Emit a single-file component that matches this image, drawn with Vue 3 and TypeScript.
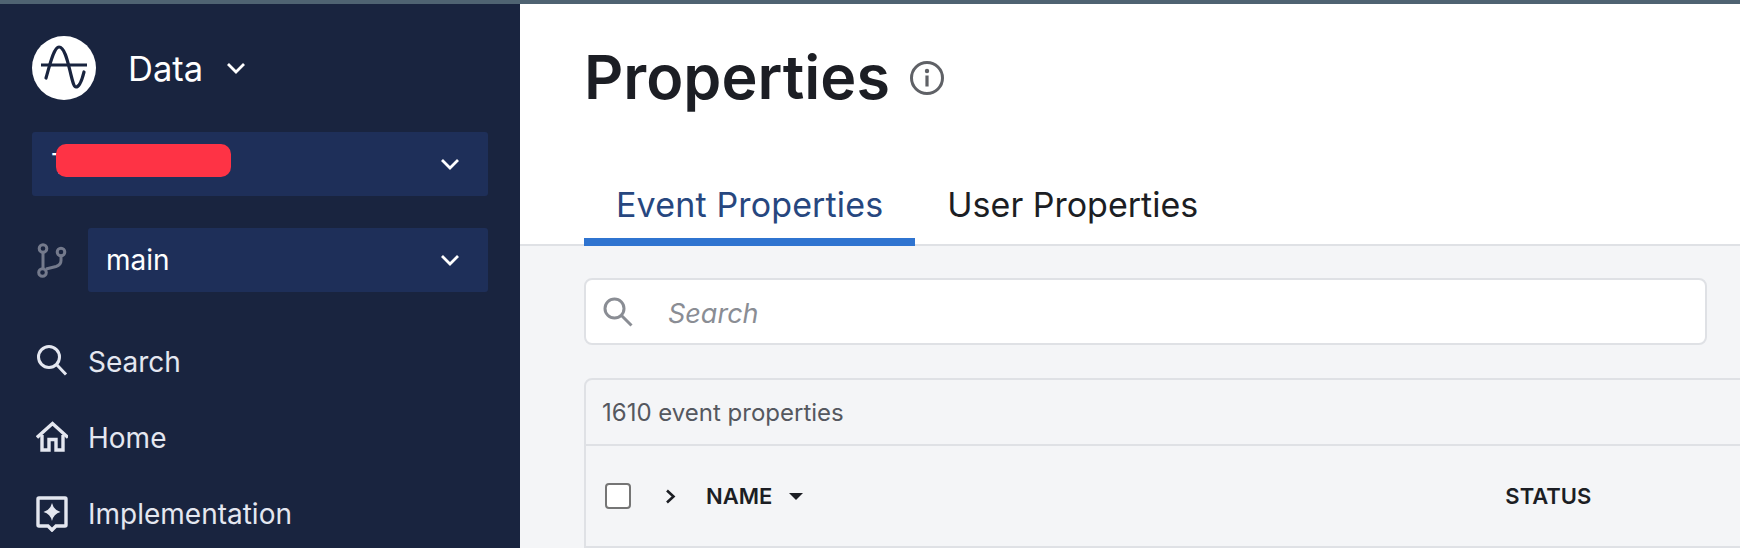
<template>
  <div class="page">
    <div class="topbar" />
    <div class="shell">
      <aside class="sidebar">
        <div class="brand">
          <svg class="logo" viewBox="0 0 64 64">
            <circle cx="32" cy="32" r="32" fill="#fff" />
            <path d="M9 29h46" stroke="#19243f" stroke-width="3.200" fill="none" />
            <path
              d="M14 42 C18 28 22 11 27 11 C33 11 36 27 39 39 C41 47 42 51 44 51 C47 51 50 44 52 36"
              stroke="#19243f"
              stroke-width="3.200"
              fill="none"
              stroke-linecap="round"
            />
          </svg>
          <span class="brand__name">Data</span>
          <svg class="chevron brand__chevron" viewBox="0 0 20 12"><path d="M2 2l8 8 8-8" /></svg>
        </div>

        <div class="select select--org">
          <span class="select__label">T</span>
          <span class="redact" />
          <svg class="chevron" viewBox="0 0 20 12"><path d="M2 2l8 8 8-8" /></svg>
        </div>

        <div class="branch">
          <svg class="branch__icon" viewBox="0 0 30 35">
            <circle cx="6" cy="5.500" r="3.800" />
            <circle cx="5.500" cy="29.500" r="3.800" />
            <circle cx="24" cy="9" r="3.800" />
            <path d="M6 9.500v16M9 26l10-2.500q5-1.500 5-6v-4.500" />
          </svg>
          <div class="select select--branch">
            <span class="select__label">main</span>
            <svg class="chevron" viewBox="0 0 20 12"><path d="M2 2l8 8 8-8" /></svg>
          </div>
        </div>

        <nav class="nav">
          <a v-for="item in navItems" :key="item.label" class="nav__item">
            <svg class="nav__icon" viewBox="0 0 32 36" v-html="item.icon" />
            <span>{{ item.label }}</span>
          </a>
        </nav>
      </aside>

      <main class="content">
        <header class="header">
          <div class="title">
            <h1>Properties</h1>
            <svg class="title__info" viewBox="0 0 34 34">
              <circle cx="17" cy="17" r="15.500" fill="none" stroke="#5f6166" stroke-width="3" />
              <circle cx="17" cy="10" r="2.200" fill="#5f6166" />
              <rect x="15.400" y="14.500" width="3.200" height="11" fill="#5f6166" />
            </svg>
          </div>
          <div class="tabs">
            <button class="tab tab--active">Event Properties</button>
            <button class="tab">User Properties</button>
          </div>
        </header>

        <section class="body">
          <div class="search">
            <svg class="search__icon" viewBox="0 0 30 30">
              <circle cx="11.500" cy="11.500" r="9.500" />
              <path d="M18.500 18.500L28.500 28.500" />
            </svg>
            <span class="search__text">Search</span>
          </div>

          <div class="table">
            <div class="table__count">1610 event properties</div>
            <div class="table__head">
              <span class="checkbox" />
              <svg class="expand" viewBox="0 0 11 15"><path d="M2 1.500l6.500 6-6.500 6" /></svg>
              <span class="col col--name">NAME</span>
              <span class="caret" />
              <span class="col col--status">STATUS</span>
            </div>
          </div>
        </section>
      </main>
    </div>
  </div>
</template>

<script setup lang="ts">
interface NavItem {
  label: string;
  icon: string;
}

const stroke = 'fill="none" stroke="#e4e7f0" stroke-width="3"';
const thick = 'fill="none" stroke="#e4e7f0" stroke-width="3.400"';

const navItems: NavItem[] = [
  {
    label: 'Search',
    icon: `<circle cx="13" cy="13" r="10.500" ${stroke}/><path d="M20.500 20.500L30 30.500" ${stroke}/>`,
  },
  {
    label: 'Home',
    icon: `<path d="M1 17.500L16.500 3.500L32 17.500" ${thick}/><path d="M6 15V30H13V19.500H20V30H27V15" ${thick}/>`,
  },
  {
    label: 'Implementation',
    icon: `<path d="M3 2h26a1 1 0 0 1 1 1v26a1 1 0 0 1-1 1h-9l-4 4-4-4H3a1 1 0 0 1-1-1V3a1 1 0 0 1 1-1z" ${thick}/><path d="M16 7q1.500 7 8.500 9q-7 2-8.500 9q-1.500-7-8.500-9q7-2 8.500-9z" fill="#e4e7f0"/>`,
  },
];
</script>

<style>
html,
body {
  margin: 0;
  background: #fff;
}
</style>

<style scoped>
.page {
  width: 1740px;
  height: 548px;
  overflow: hidden;
  font-family: Inter, "Noto Sans", sans-serif;
}

.topbar {
  height: 4px;
  background: #4f6372;
}

.shell {
  display: flex;
  height: 544px;
}

.sidebar {
  flex: none;
  box-sizing: border-box;
  width: 520px;
  padding: 32px 32px 0;
  background: #19243f;
  color: #fff;
}

.brand {
  display: flex;
  align-items: center;
  height: 64px;
}

.logo {
  width: 64px;
  height: 64px;
}

.brand__name {
  margin-left: 32px;
  font-size: 34.500px;
}

.brand__chevron {
  margin-left: 23px;
}

.chevron {
  flex: none;
  width: 20px;
  height: 12px;
  fill: none;
  stroke: #fff;
  stroke-width: 2.800;
}

.select {
  display: flex;
  align-items: center;
  justify-content: space-between;
  box-sizing: border-box;
  height: 64px;
  padding-right: 28px;
  border-radius: 3px;
  background: #1e2f59;
}

.select--org {
  position: relative;
  margin-top: 32px;
  padding-left: 19px;
}

.select--branch {
  flex: 1;
  padding-left: 18px;
}

.select__label {
  font-size: 28px;
}

/* covers the workspace name, like in the original capture */
.redact {
  position: absolute;
  top: 12px;
  left: 24px;
  width: 175px;
  height: 33px;
  border-radius: 10px;
  background: #fe3345;
}

.branch {
  display: flex;
  align-items: center;
  margin-top: 32px;
}

.branch__icon {
  flex: none;
  width: 30px;
  height: 35px;
  margin: 0 21px 0 5px;
  fill: none;
  stroke: #747a8c;
  stroke-width: 3;
}

.nav {
  margin-top: 32px;
}

.nav__item {
  display: flex;
  align-items: center;
  height: 76px;
  padding-left: 4px;
  color: #e4e7f0;
  font-size: 28px;
}

.nav__icon {
  flex: none;
  width: 32px;
  height: 36px;
  margin-right: 20px;
}

.content {
  flex: 1;
  min-width: 0;
  background: #f4f5f7;
}

.header {
  box-sizing: border-box;
  height: 242px;
  padding: 0 64px;
  border-bottom: 2px solid #dfe1e5;
  background: #fff;
}

.title {
  display: flex;
  align-items: center;
  height: 147px;
}

.title h1 {
  margin: 0;
  color: #1c1e24;
  font-size: 61px;
  font-weight: 600;
  line-height: 1;
}

.title__info {
  flex: none;
  width: 34px;
  height: 34px;
  margin-left: 20px;
}

.tabs {
  display: flex;
  height: 93px;
  align-items: flex-end;
}

.tab {
  box-sizing: border-box;
  height: 74px;
  padding: 0 32px 2px;
  border: 0;
  border-bottom: 8px solid transparent;
  margin-bottom: -2px;
  background: none;
  color: #1c1e24;
  font: inherit;
  font-size: 34px;
}

.tab--active {
  padding-right: 32px;
  border-bottom-color: #2f74d0;
  color: #27477f;
  letter-spacing: 0.150px;
}

.body {
  padding: 32px 0 0 64px;
}

.search {
  display: flex;
  align-items: center;
  box-sizing: border-box;
  width: 1123px;
  height: 67px;
  padding-left: 17px;
  border: 2px solid #dfe1e5;
  border-radius: 8px;
  background: #fff;
}

.search__icon {
  flex: none;
  width: 30px;
  height: 30px;
  fill: none;
  stroke: #8a8d94;
  stroke-width: 3;
}

.search__text {
  margin-left: 35px;
  padding-top: 4px;
  color: #8a8d94;
  font-size: 27px;
  font-style: italic;
}

.table {
  box-sizing: border-box;
  width: 1300px;
  margin-top: 33px;
  border: 2px solid #dfe1e5;
  border-radius: 8px 0 0 0;
}

.table__count {
  display: flex;
  align-items: center;
  box-sizing: border-box;
  height: 66px;
  padding-left: 16px;
  border-bottom: 2px solid #dfe1e5;
  color: #55585f;
  font-size: 24px;
}

.table__head {
  display: flex;
  align-items: center;
  height: 100px;
  padding-left: 19px;
  color: #1c1e24;
  font-size: 22px;
  font-weight: 600;
}

.checkbox {
  flex: none;
  box-sizing: border-box;
  width: 26px;
  height: 26px;
  border: 2px solid #757575;
  border-radius: 4px;
  background: #fff;
}

.expand {
  flex: none;
  width: 11px;
  height: 15px;
  margin: 0 30px 0 34px;
  fill: none;
  stroke: #1c1e24;
  stroke-width: 2.600;
}

.caret {
  flex: none;
  width: 0;
  height: 0;
  margin-left: 17px;
  border-top: 7px solid #1c1e24;
  border-right: 7px solid transparent;
  border-left: 7px solid transparent;
}

.col--status {
  margin-left: 702px;
}
</style>
